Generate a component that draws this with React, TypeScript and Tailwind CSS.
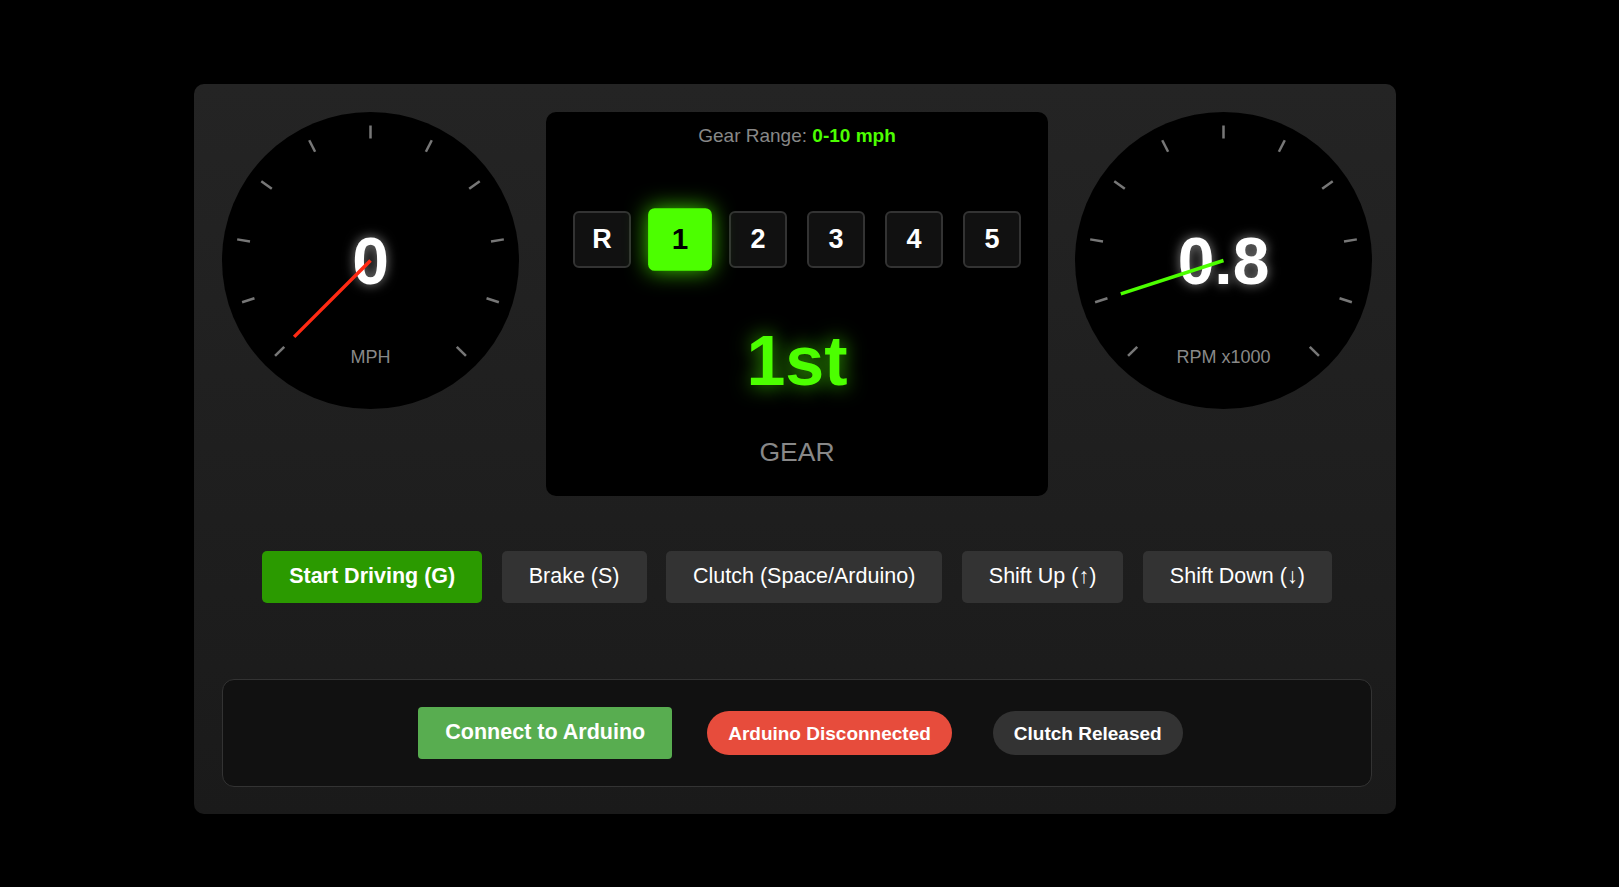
import React from "react";

// ─── gauge ──────────────────────────────────────────────────────────────────
// 11 ticks spread over 270° (-135° … +135°), needle angle derived from value.
const SIZE = 297;
const C = SIZE / 2;
const TICKS = Array.from({ length: 11 }, (_, i) => -135 + i * 27);

function Gauge({
  value,
  max,
  label,
  needle,
}: {
  value: string;
  max: number;
  label: string;
  needle: string;
}) {
  const angle = -135 + (parseFloat(value) / max) * 270;
  return (
    <div className="relative w-[297px] h-[297px] shrink-0 rounded-full bg-black">
      <div className="absolute inset-0 flex items-center justify-center">
        <span className="text-white font-bold text-[66px] leading-none [text-shadow:0_0_12px_rgba(255,255,255,0.55)]">
          {value}
        </span>
      </div>
      <svg
        className="absolute inset-0"
        width={SIZE}
        height={SIZE}
        viewBox={`0 0 ${SIZE} ${SIZE}`}
      >
        {TICKS.map((a) => (
          <line
            key={a}
            x1={C}
            y1={C - 135}
            x2={C}
            y2={C - 122}
            stroke="#777"
            strokeWidth={2.5}
            transform={`rotate(${a} ${C} ${C})`}
          />
        ))}
        <line
          x1={C}
          y1={C}
          x2={C}
          y2={C - 108}
          stroke={needle}
          strokeWidth={3.5}
          transform={`rotate(${angle} ${C} ${C})`}
        />
      </svg>
      <div className="absolute top-[236px] left-0 w-full text-center text-[18px] leading-none text-[#888]">
        {label}
      </div>
    </div>
  );
}

// ─── gear selector ──────────────────────────────────────────────────────────
const GEARS = ["R", "1", "2", "3", "4", "5"];

function GearDisplay({ current }: { current: string }) {
  return (
    <div className="flex flex-col items-center w-[502px] h-[384px] shrink-0 rounded-[10px] bg-black pt-[14px]">
      <div className="text-[19px] leading-none text-[#888]">
        Gear Range: <span className="font-bold text-[#4cff00]">0-10 mph</span>
      </div>

      <div className="flex items-center gap-[20px] h-[57px] mt-[66px]">
        {GEARS.map((g) =>
          g === current ? (
            <div
              key={g}
              className="w-[58px] h-[57px] flex items-center justify-center rounded-[6px] bg-[#4cff00] text-black font-bold text-[27px] leading-none scale-110 shadow-[0_0_20px_rgba(76,255,0,0.8)]"
            >
              {g}
            </div>
          ) : (
            <div
              key={g}
              className="w-[58px] h-[57px] flex items-center justify-center rounded-[6px] bg-[#111] border-2 border-[#333] text-white font-bold text-[27px] leading-none"
            >
              {g}
            </div>
          ),
        )}
      </div>

      <div className="mt-[58px] text-[70px] leading-none font-bold text-[#4cff00] [text-shadow:0_0_20px_rgba(76,255,0,0.7)]">
        1st
      </div>

      <div className="mt-[43px] text-[26.5px] leading-none text-[#888]">
        GEAR
      </div>
    </div>
  );
}

// ─── controls ───────────────────────────────────────────────────────────────
const CONTROLS = [
  "Brake (S)",
  "Clutch (Space/Arduino)",
  "Shift Up (↑)",
  "Shift Down (↓)",
];

export default function App() {
  return (
    <div className="min-h-screen w-full bg-black pl-[194px] pt-[84px] font-['Liberation_Sans',Arial,sans-serif]">
      <div className="w-[1202px] rounded-[10px] bg-linear-to-b from-[#242424] to-[#1a1a1a] pt-[28px] pb-[27px] pl-[28px] pr-[24px]">
        {/* ── gauges + gear ── */}
        <div className="flex items-start justify-between w-[1150px]">
          <Gauge value="0" max={140} label="MPH" needle="#ff2a14" />
          <GearDisplay current="1" />
          <Gauge value="0.8" max={8} label="RPM x1000" needle="#4cff00" />
        </div>

        {/* ── driving buttons ── */}
        <div className="flex justify-center gap-[19.5px] mt-[55px]">
          <button className="h-[52px] px-[27px] rounded-[5px] bg-[#2b9a00] text-white font-bold text-[21.5px] leading-none">
            Start Driving (G)
          </button>
          {CONTROLS.map((c) => (
            <button
              key={c}
              className="h-[52px] px-[27px] rounded-[5px] bg-[#333] text-white text-[21.5px] leading-none"
            >
              {c}
            </button>
          ))}
        </div>

        {/* ── arduino status ── */}
        <div className="mt-[76px] h-[108px] w-[1150px] rounded-[12px] border border-[#333] bg-[#111] flex items-center justify-center pl-[7px]">
          <button className="h-[52px] px-[27px] rounded-[4px] bg-[#58ad50] text-white font-bold text-[21.5px] leading-none">
            Connect to Arduino
          </button>
          <span className="ml-[35px] h-[44px] px-[21px] flex items-center rounded-full bg-[#e74c3c] text-white font-bold text-[19px] leading-none">
            Arduino Disconnected
          </span>
          <span className="ml-[41px] h-[44px] px-[21px] flex items-center rounded-full bg-[#333] text-white font-bold text-[19px] leading-none">
            Clutch Released
          </span>
        </div>
      </div>
    </div>
  );
}
